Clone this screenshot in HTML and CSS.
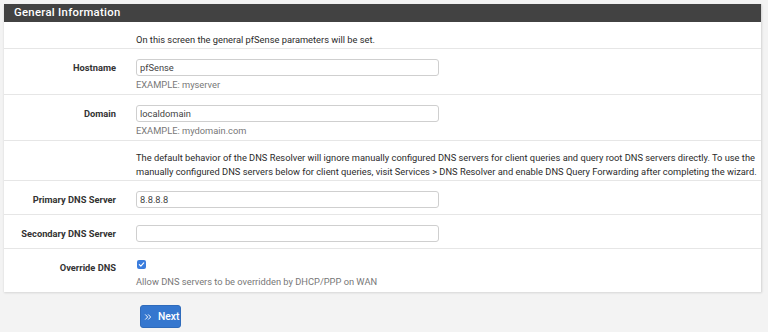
FILE: index.html
```html
<!DOCTYPE html>
<html>
<head>
<meta charset="utf-8">
<link rel="stylesheet" href="styles.css">
</head>
<body>
<div class="page">
  <div class="panel">
    <div class="panel-heading">General Information</div>
    <div class="panel-body">
      <div class="row intro">
        <div class="label"></div>
        <div class="field"><div class="note">On this screen the general pfSense parameters will be set.</div></div>
      </div>
      <div class="row help-row">
        <div class="label">Hostname</div>
        <div class="field">
          <div class="input">pfSense</div>
          <div class="help">EXAMPLE: myserver</div>
        </div>
      </div>
      <div class="row help-row">
        <div class="label">Domain</div>
        <div class="field">
          <div class="input">localdomain</div>
          <div class="help">EXAMPLE: mydomain.com</div>
        </div>
      </div>
      <div class="row text-row">
        <div class="label"></div>
        <div class="field"><div class="para">The default behavior of the DNS Resolver will ignore manually configured DNS servers for client queries and query root DNS servers directly. To use the manually configured DNS servers below for client queries, visit Services &gt; DNS Resolver and enable DNS Query Forwarding after completing the wizard.</div></div>
      </div>
      <div class="row">
        <div class="label">Primary DNS Server</div>
        <div class="field"><div class="input">8.8.8.8</div></div>
      </div>
      <div class="row">
        <div class="label">Secondary DNS Server</div>
        <div class="field"><div class="input"></div></div>
      </div>
      <div class="row check-row">
        <div class="label">Override DNS</div>
        <div class="field">
          <span class="checkbox"><svg viewBox="0 0 10 10" width="10" height="10"><path d="M2.6 5.2 L4.3 6.8 L7.5 3.3" fill="none" stroke="#fff" stroke-width="1.3" stroke-linecap="round" stroke-linejoin="round"/></svg></span>
          <div class="help">Allow DNS servers to be overridden by DHCP/PPP on WAN</div>
        </div>
      </div>
    </div>
  </div>
  <div class="actions">
    <button class="btn"><svg viewBox="0 0 10 10" width="8" height="8"><path d="M1.5 1.8 L4.6 5 L1.5 8.2 M5.2 1.8 L8.3 5 L5.2 8.2" fill="none" stroke="#fff" stroke-width="1.2"/></svg><span>Next</span></button>
  </div>
</div>
</body>
</html>
```
FILE: styles.css
```css
html, body {
  margin: 0;
  padding: 0;
  background: #f3f3f3;
  font-family: Roboto, "Liberation Sans", sans-serif;
  font-size: 9.3px;
  color: #2b2b2b;
}
.page {
  padding: 4px 6px 0 4px;
}
.panel {
  background: #fff;
  border-right: 1px solid #dcdcdc;
  box-shadow: 0 1px 2px rgba(0,0,0,0.12);
}
.panel-heading {
  background: #424242;
  color: #fff;
  font-weight: 500;
  font-size: 11.3px;
  letter-spacing: 0.3px;
  height: 18px;
  line-height: 18px;
  padding-left: 10px;
}
.row {
  display: flex;
  padding: 10px 0 6px;
  border-bottom: 1px solid #e6e6e6;
}
.row:last-child {
  border-bottom: none;
}
.label {
  width: 112px;
  flex: none;
  text-align: right;
  font-weight: 700;
  color: #333;
  line-height: 17px;
}
.field {
  margin-left: 20px;
  flex: 1;
}
.intro {
  padding-bottom: 0;
}
.note {
  line-height: 16px;
}
.input {
  width: 295px;
  height: 15px;
  border: 1px solid #cfcfcf;
  border-radius: 3px;
  padding: 0 3px;
  line-height: 15px;
  color: #444;
}
.help {
  color: #777;
  line-height: 14px;
  margin-top: 2px;
}
.help-row {
  padding-bottom: 2px;
}
.text-row {
  padding-bottom: 1px;
}
.para {
  line-height: 14px;
  padding-right: 2px;
}
.check-row {
  padding-bottom: 3px;
}
.checkbox {
  display: block;
  width: 9px;
  height: 9px;
  margin: 1px 0 0 1px;
  background: #3b7ddd;
  border-radius: 2px;
}
.checkbox svg {
  display: block;
  width: 9px;
  height: 9px;
}
.check-row .help {
  margin-top: 6px;
}
.actions {
  padding: 13px 0 0 136px;
}
.btn {
  display: flex;
  align-items: center;
  gap: 6px;
  height: 23px;
  width: 41px;
  padding: 0 0 0 3px;
  background: #3577cf;
  border: 1px solid #2f6bbb;
  border-radius: 3px;
  color: #fff;
  font-family: Roboto, "Liberation Sans", sans-serif;
  font-size: 10.3px;
  font-weight: 500;
}
```
